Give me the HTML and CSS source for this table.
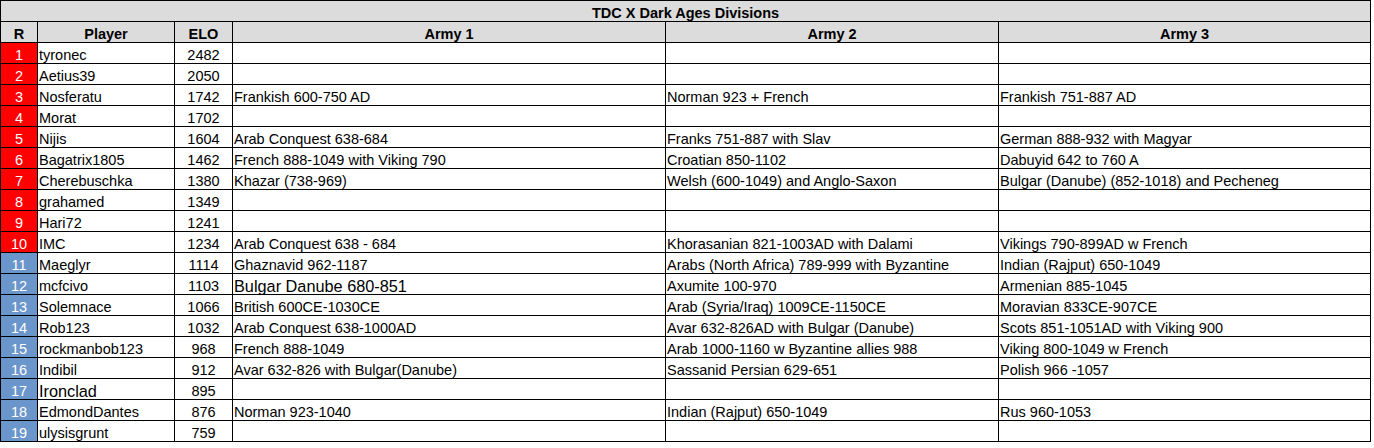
FILE: index.html
```html
<!DOCTYPE html>
<html>
<head>
<meta charset="utf-8">
<title>TDC X Dark Ages Divisions</title>
<link rel="stylesheet" href="styles.css">
</head>
<body>
<table class="sheet">
<colgroup>
<col class="c-r"><col class="c-player"><col class="c-elo"><col class="c-a1"><col class="c-a2"><col class="c-a3">
</colgroup>
<thead>
<tr><th class="title" colspan="6">TDC X Dark Ages Divisions</th></tr>
<tr class="head"><th>R</th><th>Player</th><th>ELO</th><th>Army 1</th><th>Army 2</th><th>Army 3</th></tr>
</thead>
<tbody>
<tr><td class="rank red">1</td><td>tyronec</td><td class="elo">2482</td><td></td><td></td><td></td></tr>
<tr><td class="rank red">2</td><td>Aetius39</td><td class="elo">2050</td><td></td><td></td><td></td></tr>
<tr><td class="rank red">3</td><td>Nosferatu</td><td class="elo">1742</td><td>Frankish 600-750 AD</td><td>Norman 923 + French</td><td>Frankish 751-887 AD</td></tr>
<tr><td class="rank red">4</td><td>Morat</td><td class="elo">1702</td><td></td><td></td><td></td></tr>
<tr><td class="rank red">5</td><td>Nijis</td><td class="elo">1604</td><td>Arab Conquest 638-684</td><td>Franks 751-887 with Slav</td><td>German 888-932 with Magyar</td></tr>
<tr><td class="rank red">6</td><td>Bagatrix1805</td><td class="elo">1462</td><td>French 888-1049 with Viking 790</td><td>Croatian 850-1102</td><td>Dabuyid 642 to 760 A</td></tr>
<tr><td class="rank red">7</td><td>Cherebuschka</td><td class="elo">1380</td><td>Khazar (738-969)</td><td>Welsh (600-1049) and Anglo-Saxon</td><td>Bulgar (Danube) (852-1018) and Pecheneg</td></tr>
<tr><td class="rank red">8</td><td>grahamed</td><td class="elo">1349</td><td></td><td></td><td></td></tr>
<tr><td class="rank red">9</td><td>Hari72</td><td class="elo">1241</td><td></td><td></td><td></td></tr>
<tr><td class="rank red">10</td><td>IMC</td><td class="elo">1234</td><td>Arab Conquest 638 - 684</td><td>Khorasanian 821-1003AD with Dalami</td><td>Vikings 790-899AD w French</td></tr>
<tr><td class="rank blue">11</td><td>Maeglyr</td><td class="elo">1114</td><td>Ghaznavid 962-1187</td><td>Arabs (North Africa) 789-999 with Byzantine</td><td>Indian (Rajput) 650-1049</td></tr>
<tr><td class="rank blue">12</td><td>mcfcivo</td><td class="elo">1103</td><td class="big">Bulgar Danube 680-851</td><td>Axumite 100-970</td><td>Armenian 885-1045</td></tr>
<tr><td class="rank blue">13</td><td>Solemnace</td><td class="elo">1066</td><td>British 600CE-1030CE</td><td>Arab (Syria/Iraq) 1009CE-1150CE</td><td>Moravian 833CE-907CE</td></tr>
<tr><td class="rank blue">14</td><td>Rob123</td><td class="elo">1032</td><td>Arab Conquest 638-1000AD</td><td>Avar 632-826AD with Bulgar (Danube)</td><td>Scots 851-1051AD with Viking 900</td></tr>
<tr><td class="rank blue">15</td><td>rockmanbob123</td><td class="elo">968</td><td>French 888-1049</td><td>Arab 1000-1160 w Byzantine allies 988</td><td>Viking 800-1049 w French</td></tr>
<tr><td class="rank blue">16</td><td>Indibil</td><td class="elo">912</td><td>Avar 632-826 with Bulgar(Danube)</td><td>Sassanid Persian 629-651</td><td>Polish 966 -1057</td></tr>
<tr><td class="rank blue">17</td><td class="big">Ironclad</td><td class="elo">895</td><td></td><td></td><td></td></tr>
<tr><td class="rank blue">18</td><td>EdmondDantes</td><td class="elo">876</td><td>Norman 923-1040</td><td>Indian (Rajput) 650-1049</td><td>Rus 960-1053</td></tr>
<tr><td class="rank blue">19</td><td>ulysisgrunt</td><td class="elo">759</td><td></td><td></td><td></td></tr>
</tbody>
</table>
</body>
</html>
```
FILE: styles.css
```css
html, body {
  margin: 0;
  padding: 0;
  background: #ffffff;
}

.sheet {
  table-layout: fixed;
  width: 1371px;
  border-collapse: separate;
  border-spacing: 1px;
  background: #000000;
  font-family: "Liberation Sans", Arial, sans-serif;
  font-size: 14.5px;
  color: #000000;
}

.c-r { width: 36px; }
.c-player { width: 136px; }
.c-elo { width: 57px; }
.c-a1 { width: 432px; }
.c-a2 { width: 332px; }
.c-a3 { width: 371px; }

.sheet th,
.sheet td {
  height: 20px;
  padding: 0 0 0 1px;
  line-height: 16px;
  vertical-align: bottom;
  white-space: nowrap;
  overflow: hidden;
  background: #ffffff;
  text-align: left;
  font-weight: normal;
}

.sheet th {
  background: #dcdcdc;
  font-weight: bold;
  text-align: center;
  padding: 0;
}

.sheet .elo {
  text-align: center;
  padding: 0;
}

.sheet .rank {
  text-align: center;
  color: #ffffff;
  padding: 0;
}

.sheet .red { background: #ff0000; }
.sheet .blue { background: #6b96cb; }

.sheet .big {
  font-size: 16.3px;
}
```
